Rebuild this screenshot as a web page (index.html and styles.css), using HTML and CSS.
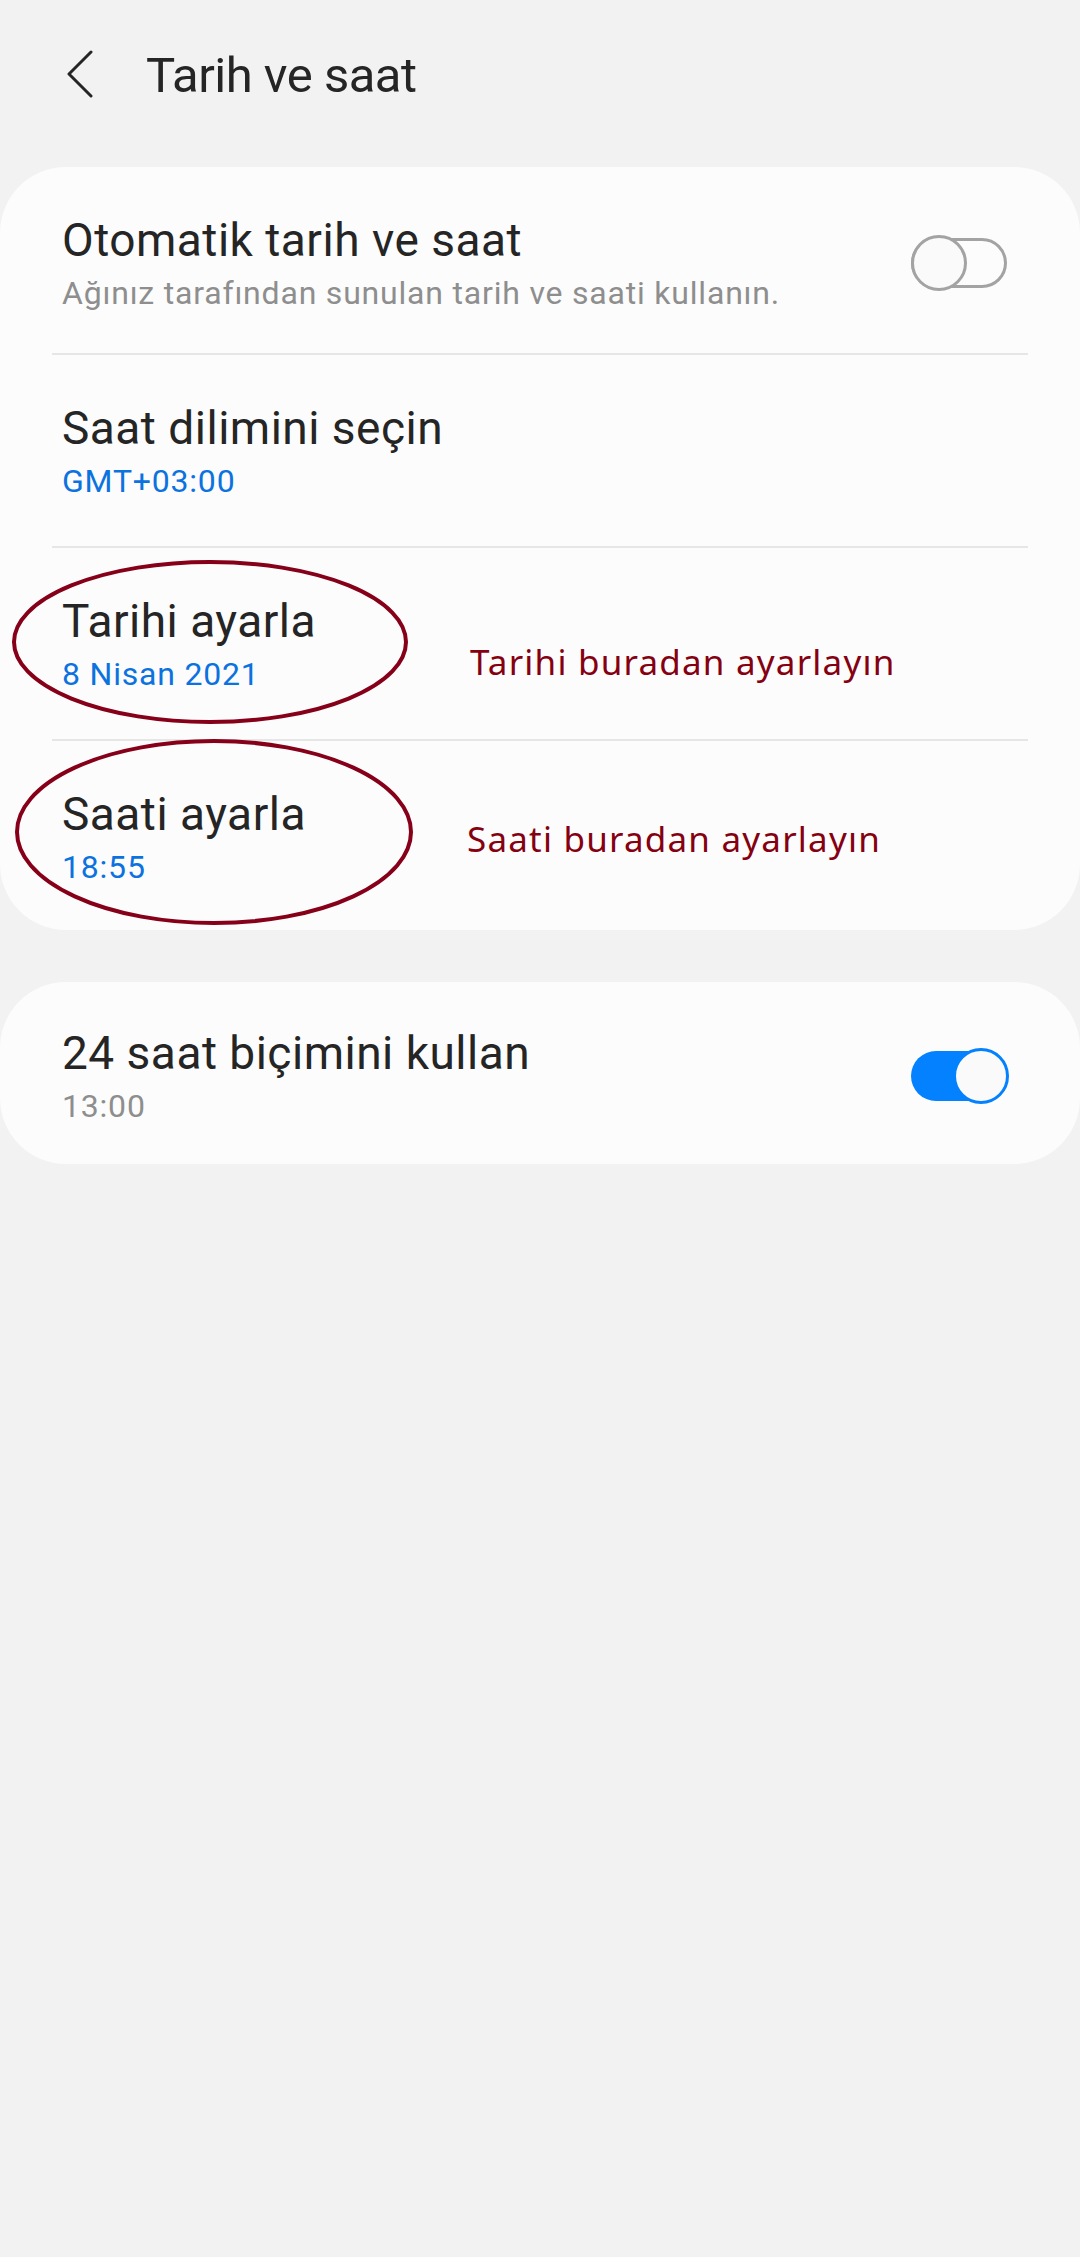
FILE: index.html
```html
<!DOCTYPE html>
<html lang="tr">
<head>
<meta charset="utf-8">
<title>Tarih ve saat</title>
<link rel="stylesheet" href="styles.css">
</head>
<body>
<header class="appbar">
  <button class="back" aria-label="Geri">
    <svg width="30" height="50" viewBox="0 0 30 50"><polyline points="24,2 2,24 24,46" fill="none" stroke="#252525" stroke-width="3" stroke-linecap="round" stroke-linejoin="round"/></svg>
  </button>
  <h1 class="title">Tarih ve saat</h1>
</header>
<main class="content">
  <section class="card card-main">
    <div class="row row-first">
      <div class="texts">
        <div class="row-title">Otomatik tarih ve saat</div>
        <div class="row-sub gray">Ağınız tarafından sunulan tarih ve saati kullanın.</div>
      </div>
      <div class="toggle off"><span class="track"></span><span class="knob"></span></div>
    </div>
    <div class="divider"></div>
    <div class="row">
      <div class="texts">
        <div class="row-title">Saat dilimini seçin</div>
        <div class="row-sub blue">GMT+03:00</div>
      </div>
    </div>
    <div class="divider"></div>
    <div class="row">
      <div class="texts">
        <div class="row-title">Tarihi ayarla</div>
        <div class="row-sub blue">8 Nisan 2021</div>
      </div>
    </div>
    <div class="divider"></div>
    <div class="row">
      <div class="texts">
        <div class="row-title">Saati ayarla</div>
        <div class="row-sub blue">18:55</div>
      </div>
    </div>
    <svg class="marks" width="1080" height="763" viewBox="0 0 1080 763">
      <ellipse cx="210" cy="475" rx="196" ry="80" fill="none" stroke="#850018" stroke-width="4"/>
      <ellipse cx="214" cy="665" rx="197" ry="91" fill="none" stroke="#850018" stroke-width="4"/>
    </svg>
    <div class="note note-date">Tarihi buradan ayarlayın</div>
    <div class="note note-time">Saati buradan ayarlayın</div>
  </section>
  <section class="card card-second">
    <div class="row row-single">
      <div class="texts">
        <div class="row-title">24 saat biçimini kullan</div>
        <div class="row-sub gray">13:00</div>
      </div>
      <div class="toggle on"><span class="track"></span><span class="knob"></span></div>
    </div>
  </section>
</main>
</body>
</html>
```
FILE: styles.css
```css
* { box-sizing: border-box; }
html, body {
  margin: 0;
  padding: 0;
  background: #f2f2f2;
}
body {
  width: 1080px;
  height: 2257px;
  font-family: Roboto, "Noto Sans", sans-serif;
  color: #252525;
}
.appbar {
  height: 150px;
  display: flex;
  align-items: center;
  padding-left: 67px;
}
.back {
  border: 0;
  background: none;
  padding: 0;
  width: 30px;
  height: 50px;
  display: flex;
  margin-right: 49px;
}
.title {
  margin: 0;
  font-size: 49px;
  font-weight: 400;
  color: #252525;
  letter-spacing: -0.5px;
}
.content {
  padding-top: 17px;
  display: flex;
  flex-direction: column;
  gap: 52px;
}
.card {
  background: #fcfcfc;
  border-radius: 66px;
  position: relative;
}
.card-main { height: 763px; }
.card-second { height: 182px; }
.row {
  display: flex;
  align-items: center;
  padding: 0 71px 0 62px;
  height: 191px;
}
.row-first { height: 186px; padding-top: 6px; }
.row-single { height: 182px; padding-top: 6px; }
.texts {
  flex: 1;
  display: flex;
  flex-direction: column;
}
.row-title {
  font-size: 46px;
  line-height: 54px;
  letter-spacing: 0.5px;
  color: #252525;
}
.row-sub {
  margin-top: 6px;
  font-size: 32px;
  line-height: 40px;
  letter-spacing: 0.8px;
}
.gray { color: #8e8e8e; }
.blue { color: #0b72e0; }
.divider {
  height: 2px;
  background: #e6e6e6;
  margin: 0 52px;
}
.toggle {
  position: relative;
  width: 98px;
  height: 56px;
  flex: none;
}
.toggle .track {
  position: absolute;
  left: 0;
  top: 3px;
  width: 96px;
  height: 50px;
  border-radius: 25px;
}
.toggle .knob {
  position: absolute;
  top: 0;
  width: 56px;
  height: 56px;
  border-radius: 50%;
  background: #fafafa;
}
.toggle.off .track { border: 3px solid #a3a3a3; }
.toggle.off .knob { left: 0; border: 3px solid #a3a3a3; }
.toggle.on .track { background: #0381fe; width: 90px; }
.toggle.on .knob { left: 42px; border: 3px solid #0381fe; }
.marks {
  position: absolute;
  left: 0;
  top: 0;
  pointer-events: none;
}
.note {
  position: absolute;
  font-family: "Noto Sans", sans-serif;
  font-size: 35px;
  line-height: 35px;
  letter-spacing: 1.2px;
  color: #850010;
  white-space: nowrap;
}
.note-date { left: 470px; top: 477px; }
.note-time { left: 467px; top: 654px; }
```
